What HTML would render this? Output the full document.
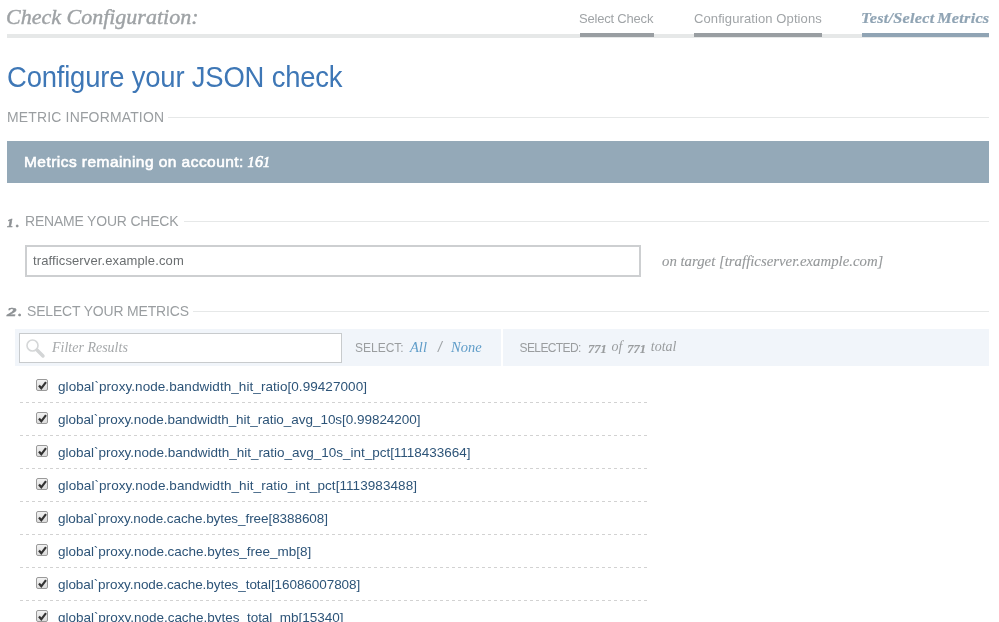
<!DOCTYPE html>
<html><head><meta charset="utf-8">
<style>
*{margin:0;padding:0;box-sizing:border-box}
html,body{width:999px;height:622px;overflow:hidden;background:#fff}
body{font-family:"Liberation Sans",sans-serif;position:relative;will-change:transform}
.abs{position:absolute;white-space:nowrap;line-height:1}
.serif{font-family:"Liberation Serif",serif}
#hdr{left:6px;top:6px;font-size:22px;font-style:italic;color:#9ea2a5;-webkit-text-stroke:0.4px #9ea2a5}
#hline{left:7px;top:34px;width:982px;height:4px;background:#e6e8e8}
.tab{top:12px;font-size:13px;color:#a0a4a7}
.tabbar{top:33px;height:4px;background:#999ea2}
#t3{font-family:"Liberation Serif",serif;font-style:italic;font-weight:bold;color:#90a4b4;font-size:15px;top:11px;letter-spacing:0.25px;word-spacing:-1.5px;transform:scaleX(1.08);transform-origin:0 0;-webkit-text-stroke:0.2px #90a4b4}
#t3bar{background:#90a4b4}
#title{left:7px;top:62px;font-size:29.5px;color:#3e77b6;letter-spacing:-0.2px;transform:scaleX(0.93);transform-origin:0 0}
.sec{font-size:15.5px;color:#9a9ea1;letter-spacing:0.2px;transform:scaleX(0.9);transform-origin:0 0}
.num{font-family:"Liberation Serif",serif;font-style:italic;font-weight:bold;font-size:13px;color:#8e9295;-webkit-text-stroke:0.6px #8e9295}
.secline{height:1px;background:#e6e8e8}
#banner{left:7px;top:141px;width:982px;height:42px;background:#94a9b8}
#banner span{position:absolute;left:17px;top:12.5px;font-size:15.5px;font-weight:normal;color:#fff;white-space:nowrap;line-height:1;letter-spacing:0.45px;-webkit-text-stroke:0.6px #fff}
#banner i{font-family:"Liberation Serif",serif;font-size:16px;letter-spacing:0;margin-left:-1px;font-weight:normal;-webkit-text-stroke:0.65px #fff}
#banner i u{text-decoration:none;font-size:14px;letter-spacing:0.3px}
#banner b{font-weight:bold}
#inp{left:25px;top:245px;width:616px;height:32px;border:2px solid #cdcfd1}
#inp span{position:absolute;left:6px;top:6.5px;font-size:13px;color:#6a6e70;line-height:1;letter-spacing:0.12px}
#ontarget{left:662px;top:253.5px;font-size:14.8px;font-style:italic;color:#95989a;-webkit-text-stroke:0.1px #95989a}
#toolbar{left:15px;top:329px;width:974px;height:37px;background:#f1f5fa}
#sep{left:501px;top:329px;width:2px;height:37px;background:#fff}
#filter{left:19px;top:333px;width:323px;height:30px;background:#fff;border:1px solid #c8cbcd}
#filter svg{position:absolute;left:6px;top:5px}
#filter span{position:absolute;left:32px;top:7px;font-size:14px;font-style:italic;color:#a5a8aa;font-family:"Liberation Serif",serif;line-height:1}
.tb{top:342px;font-size:12px;color:#9a9d9f}
.os{font-size:12.5px;position:relative;top:1.5px;-webkit-text-stroke:0.15px #9a9d9f}
.tbi{font-family:"Liberation Serif",serif;font-style:italic;font-size:14.5px;top:340px}
.row{position:absolute;left:20px;width:627px;height:33px;background:repeating-linear-gradient(90deg,#d2d2d2 0 3px,transparent 3px 6px) left bottom/100% 1px no-repeat}
.row .cb{position:absolute;left:16px;top:9px;width:12px;height:12px;border:1px solid #9a9a9a;border-radius:2px;background:linear-gradient(#f2f2f2,#dcdcdc)}
.row .cb svg{position:absolute;left:-1px;top:-1px}
.row span{position:absolute;left:38px;top:10px;font-size:13.5px;color:#2d5478;line-height:1;white-space:nowrap}
</style></head><body>
<div class="abs serif" id="hdr">Check Configuration:</div>
<div class="abs" id="hline"></div>
<div class="abs tab" style="left:579px;letter-spacing:-0.2px">Select Check</div>
<div class="abs tabbar" style="left:580px;width:74px"></div>
<div class="abs tab" style="left:694px;letter-spacing:0.1px">Configuration Options</div>
<div class="abs tabbar" style="left:694px;width:128px"></div>
<div class="abs tab" id="t3" style="left:861px">Test/Select Metrics</div>
<div class="abs tabbar" id="t3bar" style="left:862px;width:127px"></div>

<div class="abs" id="title">Configure your JSON check</div>

<div class="abs secline" style="left:168px;top:117px;width:821px"></div>
<div class="abs sec" style="left:7px;top:108.5px">METRIC INFORMATION</div>

<div class="abs" id="banner"><span>Metrics remaining on account: <i><u>1</u>6<u>1</u></i></span></div>

<div class="abs secline" style="left:184px;top:221px;width:805px"></div>
<div class="abs num" style="left:7px;top:216px;letter-spacing:2.5px">1.</div>
<div class="abs sec" style="left:25px;top:212.5px;letter-spacing:-0.19px">RENAME YOUR CHECK</div>

<div class="abs" id="inp"><span>trafficserver.example.com</span></div>
<div class="abs serif" id="ontarget">on target [trafficserver.example.com]</div>

<div class="abs secline" style="left:193px;top:311px;width:796px"></div>
<div class="abs num" style="left:7px;top:305px;"><span style="display:inline-block;transform:scaleX(1.45);transform-origin:left">2</span><span style="margin-left:5px">.</span></div>
<div class="abs sec" style="left:27px;top:302.5px;letter-spacing:-0.16px">SELECT YOUR METRICS</div>

<div class="abs" id="toolbar"></div>
<div class="abs" id="sep"></div>
<div class="abs" id="filter"><svg width="20" height="20" viewBox="0 0 20 20"><circle cx="6.5" cy="6.5" r="5.5" fill="none" stroke="#d5d7d8" stroke-width="1.6"/><path d="M11 11 L17 17" stroke="#d3d5d6" stroke-width="3.4" stroke-linecap="round"/></svg><span>Filter Results</span></div>
<div class="abs tb" style="left:355px">SELECT:</div>
<div class="abs tbi serif" style="left:410px;top:339.5px;color:#5e9cc8">All</div>
<div class="abs tb" style="left:438px;font-size:14px;top:340px;color:#a0a4a7;font-style:italic">/</div>
<div class="abs tbi serif" style="left:451px;top:339.5px;color:#5e9cc8">None</div>
<div class="abs tb" style="left:519.5px;letter-spacing:-0.6px">SELECTED:</div>
<div class="abs tbi serif" style="left:588px;color:#9a9d9f;font-size:14px;word-spacing:1.3px"><b class="os">771</b> of <b class="os">771</b> total</div>

<div class="row" style="top:370px"><div class="cb"><svg width="13" height="13" viewBox="0 0 13 13"><path d="M3 6.5 L5.3 9.3 L10 3.2" fill="none" stroke="#333" stroke-width="2.2"/></svg></div><span style="letter-spacing:0.062px">global`proxy.node.bandwidth_hit_ratio[0.99427000]</span></div>
<div class="row" style="top:403px"><div class="cb"><svg width="13" height="13" viewBox="0 0 13 13"><path d="M3 6.5 L5.3 9.3 L10 3.2" fill="none" stroke="#333" stroke-width="2.2"/></svg></div><span style="letter-spacing:-0.036px">global`proxy.node.bandwidth_hit_ratio_avg_10s[0.99824200]</span></div>
<div class="row" style="top:436px"><div class="cb"><svg width="13" height="13" viewBox="0 0 13 13"><path d="M3 6.5 L5.3 9.3 L10 3.2" fill="none" stroke="#333" stroke-width="2.2"/></svg></div><span style="letter-spacing:-0.016px">global`proxy.node.bandwidth_hit_ratio_avg_10s_int_pct[1118433664]</span></div>
<div class="row" style="top:469px"><div class="cb"><svg width="13" height="13" viewBox="0 0 13 13"><path d="M3 6.5 L5.3 9.3 L10 3.2" fill="none" stroke="#333" stroke-width="2.2"/></svg></div><span style="letter-spacing:0.071px">global`proxy.node.bandwidth_hit_ratio_int_pct[1113983488]</span></div>
<div class="row" style="top:502px"><div class="cb"><svg width="13" height="13" viewBox="0 0 13 13"><path d="M3 6.5 L5.3 9.3 L10 3.2" fill="none" stroke="#333" stroke-width="2.2"/></svg></div><span style="letter-spacing:-0.071px">global`proxy.node.cache.bytes_free[8388608]</span></div>
<div class="row" style="top:535px"><div class="cb"><svg width="13" height="13" viewBox="0 0 13 13"><path d="M3 6.5 L5.3 9.3 L10 3.2" fill="none" stroke="#333" stroke-width="2.2"/></svg></div><span style="letter-spacing:-0.026px">global`proxy.node.cache.bytes_free_mb[8]</span></div>
<div class="row" style="top:568px"><div class="cb"><svg width="13" height="13" viewBox="0 0 13 13"><path d="M3 6.5 L5.3 9.3 L10 3.2" fill="none" stroke="#333" stroke-width="2.2"/></svg></div><span style="letter-spacing:-0.064px">global`proxy.node.cache.bytes_total[16086007808]</span></div>
<div class="row" style="top:601px"><div class="cb"><svg width="13" height="13" viewBox="0 0 13 13"><path d="M3 6.5 L5.3 9.3 L10 3.2" fill="none" stroke="#333" stroke-width="2.2"/></svg></div><span style="letter-spacing:-0.023px">global`proxy.node.cache.bytes_total_mb[15340]</span></div>

</body></html>
